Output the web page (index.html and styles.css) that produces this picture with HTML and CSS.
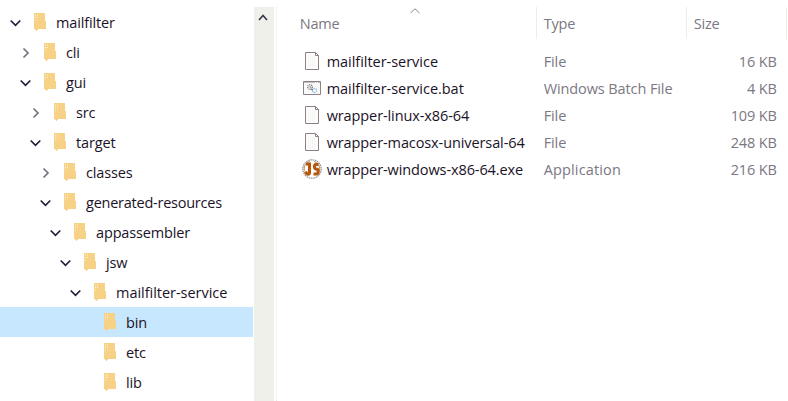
FILE: index.html
```html
<!DOCTYPE html>
<html lang="en">
<head>
<meta charset="utf-8">
<title>bin</title>
<link rel="stylesheet" href="styles.css">
</head>
<body>
<svg class="defs" aria-hidden="true">
  <symbol id="open" viewBox="0 0 12 12"><path d="M.7 3.500 5.500 8.300 10.300 3.500" fill="none" stroke="#261c39" stroke-width="1.7"/></symbol>
  <symbol id="closed" viewBox="0 0 12 12"><path d="M3.500 1.500 8 6 3.500 10.500" fill="none" stroke="#77717f" stroke-width="1.7"/></symbol>
  <symbol id="folder" viewBox="0 0 13 18"><path d="M0 0H11V8H12V16H4V17H3V18H2V17H1V16H0Z" fill="#f6d186"/><path d="M1.5 1.5V9M3.5 1.5V6" stroke="#fff4df" stroke-dasharray="1 1.5"/></symbol>
  <symbol id="file" viewBox="0 0 14 18"><path d="M.5.5H10.5L13.5 3.5V17.5H.5Z" fill="#fcfcfa" stroke="#8b8085"/><path d="M10.5.5V3.5H13.5" fill="none" stroke="#8b8085"/><path d="M3.5 4V15M5.5 4V15M7.5 4V15M9.5 5V15" stroke="#ededea" stroke-dasharray="1 1"/></symbol>
  <symbol id="batch" viewBox="0 0 18 14"><path d="M.5.5H17.5V13.5H.5Z" fill="#f9f9f7" stroke="#8b8085"/><path d="M1 1H17" stroke="#8b8085"/><path d="M12 1.5H16" stroke="#fff" stroke-dasharray="1 1"/><circle cx="7" cy="6" r="2.3" fill="none" stroke="#88818d" stroke-width="1.5" stroke-dasharray="1 .8"/><circle cx="11.5" cy="9.5" r="2" fill="#fff" stroke="#83b2de" stroke-width="1.3" stroke-dasharray="1.2 .7"/><path d="M6.5 6H8M8 8L10 9" stroke="#666"/></symbol>
  <symbol id="app" viewBox="0 0 20 20"><circle cx="10" cy="10" r="9.2" fill="#fff" stroke="#99949b" stroke-width="1.3" stroke-dasharray="1.600 .7"/><path d="M7.800 2.500A8 8 0 0 0 2.300 12M12 2.500A8 8 0 0 1 17.600 12" fill="none" stroke="#c98a50" stroke-width="1"/><path d="M4 5H7.500V13Q7.500 15.300 6 15.300T3.500 12.500M16.500 5.500H14Q12.500 5.500 12.500 7.700T14.200 10Q16.200 10 16.200 12.500T14 15H11.500" fill="none" stroke="#b5580d" stroke-width="3.100"/><path d="M9.900 3V17" stroke="#fff" stroke-width=".9"/></symbol>
</svg>
<main class="explorer">
  <nav class="tree">
    <div class="node l0"><svg class="chevron"><use href="#open"/></svg><svg class="folder"><use href="#folder"/></svg><span>mailfilter</span></div>
    <div class="node l1"><svg class="chevron"><use href="#closed"/></svg><svg class="folder"><use href="#folder"/></svg><span>cli</span></div>
    <div class="node l1"><svg class="chevron"><use href="#open"/></svg><svg class="folder"><use href="#folder"/></svg><span>gui</span></div>
    <div class="node l2"><svg class="chevron"><use href="#closed"/></svg><svg class="folder"><use href="#folder"/></svg><span>src</span></div>
    <div class="node l2"><svg class="chevron"><use href="#open"/></svg><svg class="folder"><use href="#folder"/></svg><span>target</span></div>
    <div class="node l3"><svg class="chevron"><use href="#closed"/></svg><svg class="folder"><use href="#folder"/></svg><span>classes</span></div>
    <div class="node l3"><svg class="chevron"><use href="#open"/></svg><svg class="folder"><use href="#folder"/></svg><span class="tight">generated-resources</span></div>
    <div class="node l4"><svg class="chevron"><use href="#open"/></svg><svg class="folder"><use href="#folder"/></svg><span>appassembler</span></div>
    <div class="node l5"><svg class="chevron"><use href="#open"/></svg><svg class="folder"><use href="#folder"/></svg><span>jsw</span></div>
    <div class="node l6"><svg class="chevron"><use href="#open"/></svg><svg class="folder"><use href="#folder"/></svg><span class="loose">mailfilter-service</span></div>
    <div class="node l7 selected"><svg class="chevron"></svg><svg class="folder"><use href="#folder"/></svg><span>bin</span></div>
    <div class="node l7"><svg class="chevron"></svg><svg class="folder"><use href="#folder"/></svg><span>etc</span></div>
    <div class="node l7"><svg class="chevron"></svg><svg class="folder"><use href="#folder"/></svg><span>lib</span></div>
  </nav>
  <div class="scrollbar"><svg viewBox="0 0 10 8"><path d="M1 6 5 1.500 9 6" fill="none" stroke="#3d354b" stroke-width="1.7"/></svg></div>
  <section class="files">
    <header class="head">
      <div class="name">Name<svg class="sort" viewBox="0 0 10 6"><path d="M.5 5 5 .8 9.500 5" fill="none" stroke="#8b8591"/></svg></div>
      <div class="type">Type</div>
      <div class="size">Size</div>
    </header>
    <div class="row"><span class="icon"><svg class="i-file"><use href="#file"/></svg></span><span class="fname loose">mailfilter-service</span><span class="kind">File</span><span class="bytes">16 KB</span></div>
    <div class="row"><span class="icon"><svg class="i-batch"><use href="#batch"/></svg></span><span class="fname loose">mailfilter-service.bat</span><span class="kind">Windows Batch File</span><span class="bytes">4 KB</span></div>
    <div class="row"><span class="icon"><svg class="i-file"><use href="#file"/></svg></span><span class="fname">wrapper-linux-x86-64</span><span class="kind">File</span><span class="bytes">109 KB</span></div>
    <div class="row"><span class="icon"><svg class="i-file"><use href="#file"/></svg></span><span class="fname">wrapper-macosx-universal-64</span><span class="kind">File</span><span class="bytes">248 KB</span></div>
    <div class="row"><span class="icon"><svg class="i-app"><use href="#app"/></svg></span><span class="fname">wrapper-windows-x86-64.exe</span><span class="kind app-kind">Application</span><span class="bytes">216 KB</span></div>
  </section>
</main>
</body>
</html>
```
FILE: styles.css
```css
* { box-sizing: border-box; }
body { margin: 0; background: #fff; color: #1b1228; font: 14.5px/20px "Open Sans", "Noto Sans", sans-serif; letter-spacing: -0.15px; overflow: hidden; }
svg { display: block; flex: none; }
.defs { width: 0; height: 0; position: absolute; }
.explorer { display: flex; height: 401px; padding-top: 7px; }
.tree { width: 254px; padding-right: 1px; }
.node { display: flex; align-items: center; height: 30px; white-space: nowrap; }
.node span { padding-top: 2px; }
.chevron { width: 12px; height: 12px; margin: 2px 12px 0 0; }
.folder { width: 13px; height: 18px; margin-right: 9px; }
.l0 { padding-left: 10px; }
.l1 { padding-left: 20px; }
.l2 { padding-left: 30px; }
.l3 { padding-left: 40px; }
.l4 { padding-left: 50px; }
.l5 { padding-left: 60px; }
.l6 { padding-left: 70px; }
.l7 { padding-left: 80px; }
.selected { background: #c7e7ff; }
.scrollbar { width: 20px; background: #f0f0eb; padding: 7px 0 0 4px; }
.scrollbar svg { width: 10px; height: 8px; }
.files { width: 513px; margin-left: 2px; border-left: 1px dotted #e7e7e3; }
.head { display: flex; height: 32px; color: #7b7783; line-height: 33px; }
.head > div { border-right: 1px solid #edede9; }
.name { width: 260px; padding-left: 23px; display: flex; }
.sort { width: 10px; height: 6px; margin: 1px 0 0 70px; }
.type { width: 150px; padding-left: 7px; }
.size { width: 100px; padding-left: 7px; }
.row { display: flex; align-items: center; height: 27px; color: #7b7783; white-space: nowrap; }
.head + .row { margin-top: 9px; }
.icon { width: 50px; display: flex; justify-content: center; padding-left: 20px; }
.i-file { width: 14px; height: 18px; margin-top: -2px; }
.i-batch { width: 18px; height: 14px; margin-top: -2px; }
.i-app { width: 20px; height: 20px; margin-top: -2px; }
.fname { width: 217px; color: #1b1228; letter-spacing: -0.1px; }
.tight { letter-spacing: -0.24px; }
.loose { letter-spacing: -0.03px; }
.kind { width: 150px; letter-spacing: -0.1px; }
.app-kind { letter-spacing: 0.15px; }
.bytes { width: 83px; text-align: right; }
```
